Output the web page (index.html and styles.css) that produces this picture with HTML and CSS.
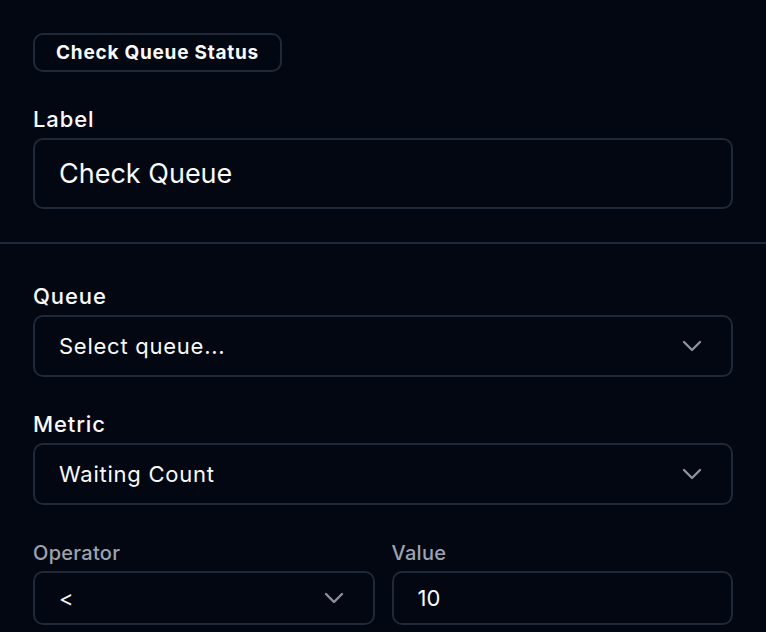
FILE: index.html
```html
<!DOCTYPE html>
<html lang="en">
<head>
<meta charset="utf-8">
<title>Check Queue Status</title>
<link rel="stylesheet" href="styles.css">
</head>
<body>
<div class="panel">
  <section class="head">
    <span class="badge">Check Queue Status</span>
    <div class="field-label">Label</div>
    <div class="control control-lg">Check Queue</div>
  </section>
  <div class="divider"></div>
  <section class="body">
    <div class="field">
      <div class="field-label">Queue</div>
      <div class="control select">
        <span>Select queue...</span>
        <svg class="chev" width="20" height="12" viewBox="0 0 20 12"><path d="M2 2 L10 10 L18 2" fill="none" stroke="currentColor" stroke-width="2.4" stroke-linecap="round" stroke-linejoin="round"/></svg>
      </div>
    </div>
    <div class="field">
      <div class="field-label">Metric</div>
      <div class="control select">
        <span>Waiting Count</span>
        <svg class="chev" width="20" height="12" viewBox="0 0 20 12"><path d="M2 2 L10 10 L18 2" fill="none" stroke="currentColor" stroke-width="2.4" stroke-linecap="round" stroke-linejoin="round"/></svg>
      </div>
    </div>
    <div class="row">
      <div class="cell">
        <div class="field-label small">Operator</div>
        <div class="control select control-sm">
          <span>&lt;</span>
          <svg class="chev" width="20" height="12" viewBox="0 0 20 12"><path d="M2 2 L10 10 L18 2" fill="none" stroke="currentColor" stroke-width="2.4" stroke-linecap="round" stroke-linejoin="round"/></svg>
        </div>
      </div>
      <div class="cell">
        <div class="field-label small">Value</div>
        <div class="control control-sm">10</div>
      </div>
    </div>
  </section>
</div>
</body>
</html>
```
FILE: styles.css
```css
html, body {
  margin: 0;
  padding: 0;
  background: #030712;
}
body {
  font-family: Inter, "Noto Sans", sans-serif;
  color: #f9fafb;
  height: 632px;
  overflow: hidden;
}
.panel {
  display: flex;
  flex-direction: column;
}
.head {
  padding: 33px 33px 33px 33px;
  display: flex;
  flex-direction: column;
  align-items: flex-start;
}
.badge {
  display: inline-block;
  box-sizing: border-box;
  height: 39px;
  line-height: 35px;
  padding: 0 21px;
  border: 2px solid #1f2937;
  border-radius: 10px;
  font-size: 19px;
  font-weight: 700;
  letter-spacing: 0.75px;
}
.field-label {
  font-size: 22px;
  font-weight: 500;
  line-height: 30px;
  margin-bottom: 4px;
  letter-spacing: 0.9px;
}
.head .field-label {
  margin-top: 32px;
}
.field-label.small {
  font-size: 20px;
  line-height: 28px;
  color: #9ca3af;
  letter-spacing: 0.3px;
}
.control {
  box-sizing: border-box;
  width: 100%;
  height: 62px;
  border: 2px solid #1f2937;
  border-radius: 10px;
  padding: 0 29px 0 24px;
  display: flex;
  align-items: center;
  font-size: 22px;
  letter-spacing: 0.75px;
}
.control-lg {
  height: 71px;
  font-size: 27px;
  letter-spacing: 0;
  align-self: stretch;
}
.control-sm {
  height: 54px;
  letter-spacing: 0;
}
.select {
  justify-content: space-between;
}
.chev {
  color: #8b919c;
  flex: none;
}
.divider {
  height: 2px;
  background: #1f2937;
}
.body {
  padding: 37px 33px 0 33px;
  display: flex;
  flex-direction: column;
}
.field + .field {
  margin-top: 32px;
}
.row {
  margin-top: 34px;
  display: grid;
  grid-template-columns: 1fr 1fr;
  gap: 17px;
}
```
